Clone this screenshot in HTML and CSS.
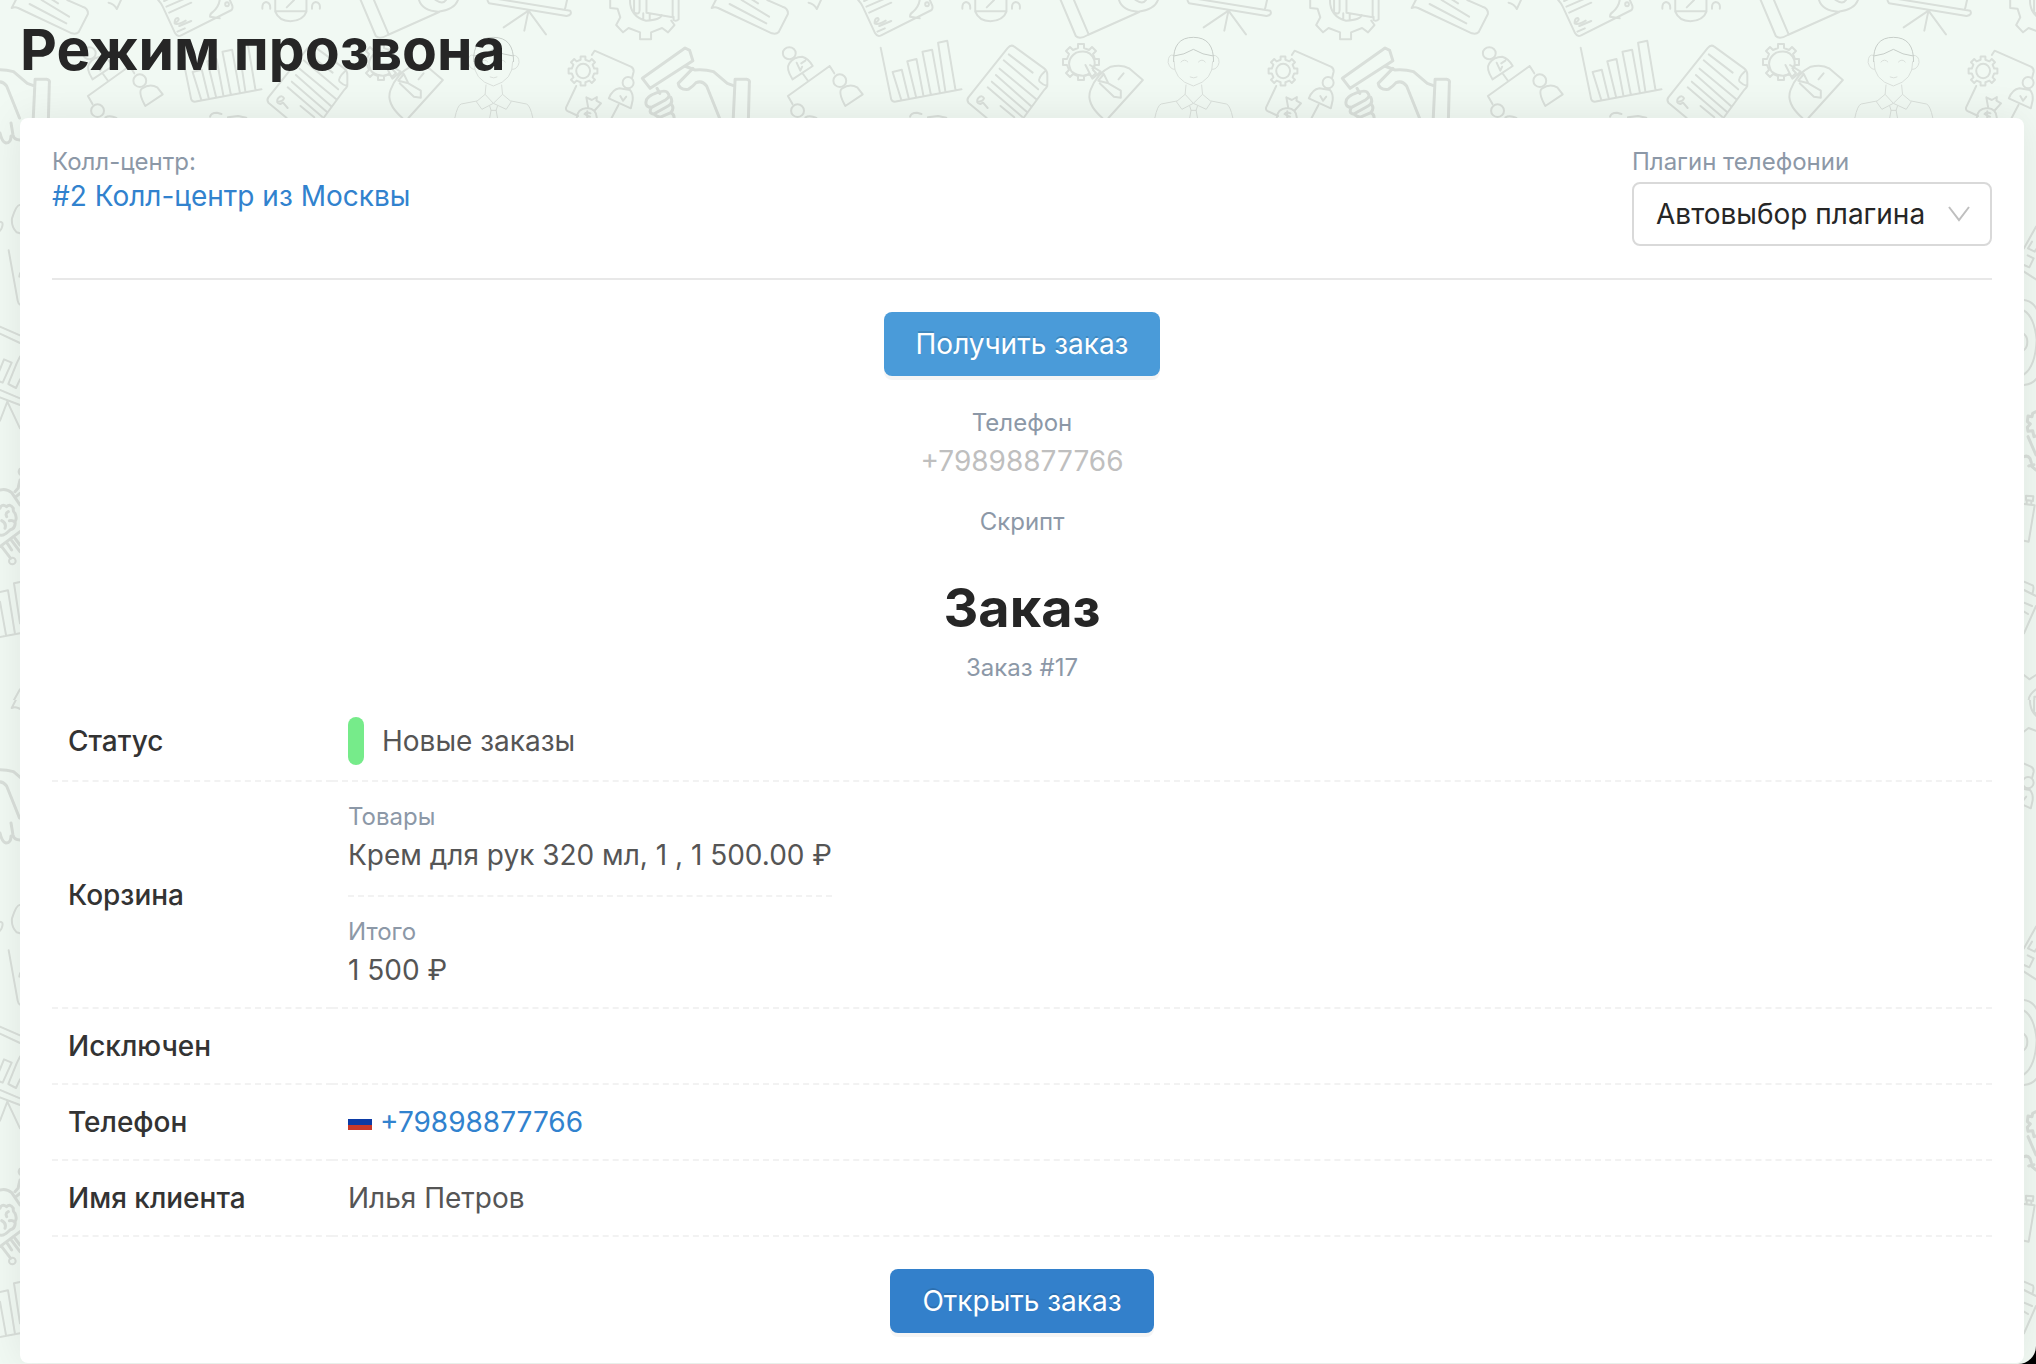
FILE: index.html
```html
<!DOCTYPE html>
<html lang="ru">
<head>
<meta charset="utf-8">
<title>Режим прозвона</title>
<link rel="stylesheet" href="styles.css">
</head>
<body>
<svg class="wallpaper" aria-hidden="true">
  <defs>
    <path id="cog" d="M-3-14L-3-18H3V-14L8-12L11-15L15-11L12-8L14-3H18V3H14L12 8L15 11L11 15L8 12L3 14V18H-3V14L-8 12L-11 15L-15 11L-12 8L-14 3H-18V-3H-14L-12-8L-15-11L-11-15L-8-12Z"/>
    <g id="doodles">
      <!-- top row: board, gear, bubble, certificate, bug, folder -->
      <g transform="translate(500 0) scale(.45918 .33333)">
        <path class="bold" d="M-27 2L-24 10L145 48Q158 45 153 32L-27-8M146 0L142 25M62 32L8 82M62 32L53 92M62 32L100 103"/>
        <path d="M240 0V24L256 26L262 52L253 75L268 97L280 84L305 97V118H329V97L353 84L366 97L380 75L373 62M283 0Q283 50 318 62Q350 60 352 45M292 0V38Q304 46 304 30V0M319 0V38L376 52V0M389 0V58Q384 65 378 60V50M312 40V58M326 42V58"/>
        <path class="bold" d="M470 0L461 24Q468 20 475 24L592 100Q602 104 607 96L627 42Q628 25 615 20L582 0M500 12L580 70M526 0L586 50M546-4L562 10M672 8Q685 12 690 27L699 0"/>
        <path d="M780 0Q787 10 790 20L817 100Q822 112 830 106L940 30Q944 22 940 12L936 0M793 3L804-4M798 20L838-4M804 38L852 8M826 78L852 63M822 95L838 85M817 68Q828 60 823 54Q815 55 816 70Q822 76 840 62M893 50Q893 40 899 36Q912 20 914 0M893 50L914 55"/>
        <ellipse cx="930" cy="13" rx="4" ry="6"/>
        <path class="bold" d="M1035 0V35Q1043 63 1068 64Q1096 62 1103 35V0M1035 34H1103M1076 0L1060 22M1007 26Q1006 8 1015 6Q1025 8 1024 26M1115 26Q1114 8 1123 6Q1134 8 1132 26"/>
        <path class="bold" d="M1221 0L1254 108Q1262 120 1280 105L1392 36M1250 0L1282 103M1348 0Q1355 32 1390 35Q1425 30 1433 0M1384 0Q1400 15 1407 0"/>
        <!-- second row: project card, gavel, team, chart, contract, idea, operator -->
        <path d="M200 165L206 152L285 200Q292 205 291 215L288 232M166 258L144 322Q142 332 150 335L170 348M237 295Q245 268 260 265L283 270Q290 280 289 300L285 325ZM258 315L243 354M262 288L268 302L275 290M188 292L200 300L211 291L210 302L220 310L207 330M188 292L192 322M167 354Q168 326 190 324Q210 326 211 354M197 340Q188 334 184 342Q190 348 196 350M190 334V354"/>
        <ellipse cx="279" cy="248" rx="12" ry="17"/>
        <ellipse cx="181" cy="213" rx="15" ry="22"/>
        <path class="heavy" d="M403 144L413 151L420 182L327 265L310 235ZM402 198L425 210M342 265L348 280M420 205L388 250Q390 270 410 268Q420 260 427 248Q440 240 450 258L478 354M425 210Q445 208 465 215L495 250L507 256M508 354L512 238L537 238Q545 240 543 250L541 354M318 305Q318 290 342 278Q362 268 366 280Q372 290 360 300L330 322Q316 322 318 305M330 322Q322 340 335 342L366 318Q378 310 372 292M335 342Q345 354 352 350L372 338Q380 325 374 314M372 338Q380 344 379 354"/>
        <g class="bold">
          <ellipse cx="630" cy="160" rx="14" ry="18"/><ellipse cx="740" cy="242" rx="14" ry="19"/><ellipse cx="648" cy="332" rx="14" ry="19"/>
          <path d="M637 238Q622 205 630 190Q640 170 658 170Q672 175 681 198ZM660 222L671 243M718 198L627 288L637 312M718 198L728 220M752 318Q735 275 745 265Q762 250 778 262L790 283ZM665 352Q675 344 689 354M646 188L654 212L658 200M656 190L665 182"/>
          <path d="M829 143L852 298Q855 308 865 304L1005 268M874 300L855 216L875 209L890 294M906 290L887 184L907 177L922 286M938 282L920 155L941 149L958 278M970 275L954 128L974 122L992 270"/>
          <path d="M893 350Q895 338 908 338L918 342M932 352L954 348L972 353M1060 354L1020 308Q1016 300 1020 292L1105 145Q1113 132 1120 140L1185 205Q1192 212 1192 225V255Q1192 262 1185 270L1140 354M1188 212Q1170 235 1175 245Q1182 255 1192 258M1108 163L1160 218M1097 181L1172 268M1088 206L1168 298M1080 225L1158 320M1071 245L1147 335M1062 262L1137 350M1090 318L1120 352M1040 305Q1052 305 1054 295Q1049 283 1041 295Q1035 310 1046 312L1052 308L1062 324"/>
          <path d="M1285 222Q1265 235 1245 215Q1230 180 1255 158Q1285 145 1294 180Q1298 195 1290 205M1275 195L1290 236L1308 215L1285 195M1312 354Q1275 310 1286 270Q1300 220 1330 200Q1355 192 1370 205L1400 240L1325 354M1325 250L1315 222L1303 242ZM1306 250L1337 290L1352 293V272L1325 250M1358 220L1347 238"/>
        </g>
        <path class="fine" d="M1467 166Q1455 160 1455 188Q1460 210 1470 208M1553 166Q1566 165 1566 188Q1562 210 1550 208M1468 185Q1466 240 1510 258Q1554 240 1552 185M1483 186Q1491 174 1498 186M1521 186Q1529 174 1536 186M1503 231Q1511 237 1518 231M1494 255L1492 283L1510 310L1530 283L1528 255M1492 283L1473 305L1485 328L1510 310L1538 328L1549 305L1530 283M1474 303L1440 312Q1432 315 1426 354M1549 303L1582 312Q1590 315 1596 354M1502 318L1505 331H1516L1519 318M1505 331L1502 354M1516 331L1519 354"/>
        <path class="hair" d="M1467 185Q1465 112 1510 112Q1555 112 1554 185M1468 168Q1490 165 1510 148Q1530 165 1553 168"/>
      </g>
      <use href="#cog" transform="translate(583 71) scale(.8)"/>
      <use href="#cog" class="bold" transform="translate(1081 62)"/>
      <!-- left margin -->
      <path class="heavy" d="M0 133Q2 142 6 143Q11 143 11 136M11 123L13 135Q14 140 20 140"/>
      <g transform="translate(0 180) scale(.33333)">
        <path d="M60 75Q50 72 36 115Q33 140 50 157L60 160M0 125Q10 125 7 138Q5 148 0 152M26 211L53 362Q55 372 60 374M60 280L58 290M0 440L60 466M0 461L60 489M-5 580L12 538L35 548L8 608L-5 603M60 530L50 550L25 612L48 624L60 598M0 630L60 655M0 652L60 675M22 665L0 722M22 665L60 745"/>
        <path class="heavy" d="M60 868Q55 876 60 882M60 900L54 925L45 935M0 930Q20 925 35 938L60 975M48 950L60 940M0 985Q5 970 20 980Q30 970 40 985Q38 995 45 1000Q52 1015 45 1025Q48 1045 30 1050Q10 1070 0 1065M25 995Q15 1000 20 1010M28 1022Q38 1020 43 1025M5 1022Q20 1030 15 1045M0 1100L60 1055M5 1100L32 1135M22 1090L35 1110M35 1082L60 1115M45 1075L60 1095"/>
        <circle class="bold" cx="37" cy="1143" r="10"/>
        <path d="M0 1236L24 1231L45 1362M0 1265L18 1365M60 1206L42 1210L60 1330M0 1371L60 1360M42 1560L60 1528"/>
      </g>
      <!-- right margin -->
      <g transform="translate(606 240) scale(.33333)">
        <path d="M54 25L90-40M66 25L78 5M66 25L86 35L90 28M65 46L83 55L70 82L54 75M54 95L90 118M60 767L82 769L81 783L60 780ZM62 783V793M76 784V793M54 792L86 796L68 905L54 902M54 1025L80 1036Q85 1040 80 1058M54 1050L90 1068M54 1088L78 1098M54 1115L66 1122M90 1098L54 1180M54 1305L70 1318L90 1305M90 1348Q68 1365 68 1380M90 1370H85V1380"/>
        <path class="bold" d="M54 180Q90 185 100 230M54 212Q85 230 92 300Q88 380 54 403M54 282Q64 290 64 305Q64 322 54 330M54 435Q80 432 92 415"/>
        <path class="heavy" d="M90 515L80 520L78 530L66 528L64 545L73 552L64 562L66 574L80 572L84 590L90 588M66 590L90 645M54 650Q65 645 72 655L76 668M68 678L84 674M78 680L90 690"/>
      </g>
    </g>
    <pattern id="tile" width="700" height="700" patternUnits="userSpaceOnUse">
      <use href="#doodles"/>
      <use href="#doodles" x="-700"/>
    </pattern>
  </defs>
  <rect width="100%" height="100%" fill="url(#tile)" stroke="none"/>
</svg>

<main class="page">
  <h1 class="title">Режим прозвона</h1>

  <section class="card">
    <header class="card-head">
      <div class="field">
        <span class="caption">Колл-центр:</span>
        <a class="link" href="#">#2 Колл-центр из Москвы</a>
      </div>
      <div class="field plugin">
        <label class="caption" for="plugin">Плагин телефонии</label>
        <div class="select">
          <select id="plugin"><option>Автовыбор плагина</option></select>
          <svg class="chevron" viewBox="0 0 22 16" aria-hidden="true"><path d="M1 1L11 14L21 1"/></svg>
        </div>
      </div>
    </header>

    <div class="call">
      <button class="btn btn-light" type="button">Получить заказ</button>
      <div class="call-phone">
        <span class="caption">Телефон</span>
        <span class="muted">+79898877766</span>
      </div>
      <span class="caption">Скрипт</span>
      <h2 class="subtitle">Заказ</h2>
      <span class="caption">Заказ #17</span>
    </div>

    <table class="details">
      <tbody>
        <tr>
          <th scope="row">Статус</th>
          <td><div class="status"><i class="status-mark"></i>Новые заказы</div></td>
        </tr>
        <tr>
          <th scope="row">Корзина</th>
          <td>
            <dl class="basket">
              <div class="basket-item"><dt class="caption">Товары</dt><dd>Крем для рук 320 мл, 1 , 1 500.00 ₽</dd></div>
              <div class="basket-item"><dt class="caption">Итого</dt><dd>1 500 ₽</dd></div>
            </dl>
          </td>
        </tr>
        <tr><th scope="row">Исключен</th><td></td></tr>
        <tr>
          <th scope="row">Телефон</th>
          <td>
            <div class="phone">
              <svg class="flag" viewBox="0 0 24 16" aria-hidden="true"><path fill="#fff" d="M0 0h24v5H0z"/><path fill="#0c3ba6" d="M0 5h24v6H0z"/><path fill="#c8392b" d="M0 11h24v5H0z"/></svg>
              <a class="link" href="tel:+79898877766">+79898877766</a>
            </div>
          </td>
        </tr>
        <tr><th scope="row">Имя клиента</th><td>Илья Петров</td></tr>
      </tbody>
    </table>

    <footer class="card-foot">
      <button class="btn" type="button">Открыть заказ</button>
    </footer>
  </section>
</main>
</body>
</html>
```
FILE: styles.css
```css
* { box-sizing: border-box; }

html { background: #000; }

body {
  margin: 0;
  min-height: 100vh;
  position: relative;
  overflow: hidden;
  border-bottom-right-radius: 18px;
  background: #f1f9f3;
  color: #555;
  font: 28px/44px Inter, "Liberation Sans", sans-serif;
}

.wallpaper {
  position: absolute;
  inset: 0;
  width: 100%;
  height: 100%;
  fill: none;
  stroke: #d9dfda;
  stroke-width: 2px;
  stroke-linejoin: round;
  stroke-linecap: round;
}
.wallpaper path,
.wallpaper ellipse,
.wallpaper circle { vector-effect: non-scaling-stroke; }
.wallpaper .fine { stroke-width: 1px; }
.wallpaper .hair { stroke: #c6cdc8; stroke-width: 1px; }
.wallpaper .bold { stroke-width: 2px; }
.wallpaper .heavy { stroke-width: 3px; }

.page {
  position: relative;
  padding: 16px 12px 0 20px;
}

.title,
.subtitle {
  margin: 0;
  color: #262626;
  font-weight: 700;
}
.title { font-size: 57px; line-height: 68px; margin-bottom: 34px; }
.subtitle { font-size: 54px; line-height: 72px; margin: 32px 0 6px; }

.card {
  padding: 26px 32px 30px;
  border-radius: 8px;
  background: #fff;
  box-shadow: 0 0 40px rgba(0, 0, 0, .08);
}

.card-head {
  display: flex;
  justify-content: space-between;
  padding-bottom: 32px;
  border-bottom: 2px solid #e8e8e8;
}
.field { display: flex; flex-direction: column; }
.plugin { width: 360px; gap: 2px; }

.caption {
  color: #8c98a7;
  font-size: 24px;
  line-height: 36px;
}
.link { color: #3182ce; text-decoration: none; line-height: 32px; }
.muted { color: #bfbfbf; line-height: 40px; }

.select { position: relative; }
.select select {
  display: block;
  width: 100%;
  height: 64px;
  padding: 0 48px 0 22px;
  border: 2px solid #d9d9d9;
  border-radius: 8px;
  background: #fff;
  color: #262626;
  font: inherit;
  appearance: none;
}
.chevron {
  position: absolute;
  top: 24px;
  right: 22px;
  width: 22px;
  height: 16px;
  fill: none;
  stroke: #bfbfbf;
  stroke-width: 2px;
  pointer-events: none;
}

.call {
  display: flex;
  flex-direction: column;
  align-items: center;
  padding: 32px 0 16px;
}
.call-phone {
  display: flex;
  flex-direction: column;
  align-items: center;
  margin: 29px 0 23px;
}

.btn {
  height: 64px;
  padding: 0 32px;
  border: 0;
  border-radius: 8px;
  background: #3380cb;
  box-shadow: 0 4px 0 rgba(0, 0, 0, .04);
  color: #fff;
  font: inherit;
  text-shadow: 0 -2px 0 rgba(0, 0, 0, .12);
}
.btn-light { background: #4a9bd9; }

.details {
  width: 100%;
  border-collapse: separate;
  border-spacing: 0;
}
.details th,
.details td {
  padding: 15px 16px;
  border-bottom: 2px dashed #f2f2f2;
  text-align: left;
}
.details th {
  width: 280px;
  color: #333;
  font-weight: 500;
}

.status { display: flex; align-items: center; gap: 18px; }
.status-mark {
  width: 16px;
  height: 48px;
  border-radius: 8px;
  background: #76eb8a;
}

.basket {
  display: inline-block;
  margin: 0;
  padding: 2px 0;
  vertical-align: top;
}
.basket-item + .basket-item {
  margin-top: 20px;
  padding-top: 17px;
  border-top: 2px dashed #f2f2f2;
}
.basket dd { margin: 0; line-height: 40px; }

.phone { display: flex; align-items: center; gap: 8px; height: 44px; }
.flag { width: 24px; height: 16px; }

.card-foot {
  display: flex;
  justify-content: center;
  padding-top: 32px;
}
```
